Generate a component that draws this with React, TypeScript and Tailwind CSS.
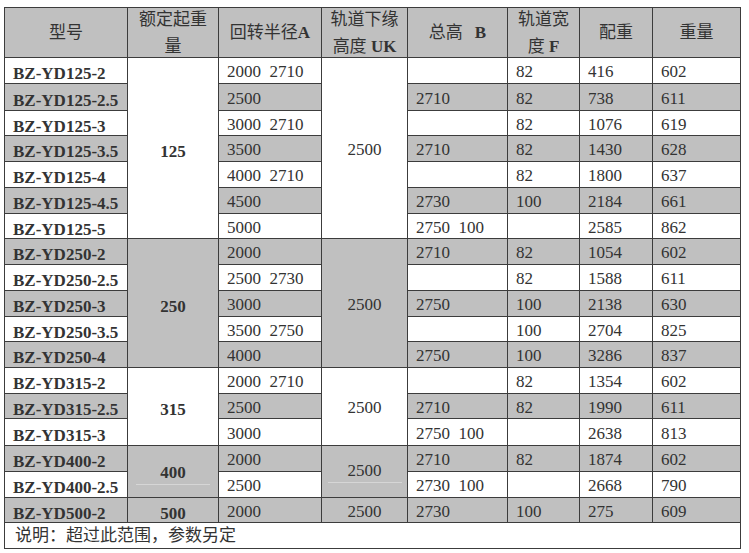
import React from 'react';

type Row = { m: string; a: string; b: string; f: string; p: string; w: string };

const rows: Row[] = [
  { m: 'BZ-YD125-2', a: '2000  2710', b: '', f: '82', p: '416', w: '602' },
  { m: 'BZ-YD125-2.5', a: '2500', b: '2710', f: '82', p: '738', w: '611' },
  { m: 'BZ-YD125-3', a: '3000  2710', b: '', f: '82', p: '1076', w: '619' },
  { m: 'BZ-YD125-3.5', a: '3500', b: '2710', f: '82', p: '1430', w: '628' },
  { m: 'BZ-YD125-4', a: '4000  2710', b: '', f: '82', p: '1800', w: '637' },
  { m: 'BZ-YD125-4.5', a: '4500', b: '2730', f: '100', p: '2184', w: '661' },
  { m: 'BZ-YD125-5', a: '5000', b: '2750  100', f: '', p: '2585', w: '862' },
  { m: 'BZ-YD250-2', a: '2000', b: '2710', f: '82', p: '1054', w: '602' },
  { m: 'BZ-YD250-2.5', a: '2500  2730', b: '', f: '82', p: '1588', w: '611' },
  { m: 'BZ-YD250-3', a: '3000', b: '2750', f: '100', p: '2138', w: '630' },
  { m: 'BZ-YD250-3.5', a: '3500  2750', b: '', f: '100', p: '2704', w: '825' },
  { m: 'BZ-YD250-4', a: '4000', b: '2750', f: '100', p: '3286', w: '837' },
  { m: 'BZ-YD315-2', a: '2000  2710', b: '', f: '82', p: '1354', w: '602' },
  { m: 'BZ-YD315-2.5', a: '2500', b: '2710', f: '82', p: '1990', w: '611' },
  { m: 'BZ-YD315-3', a: '3000', b: '2750  100', f: '', p: '2638', w: '813' },
  { m: 'BZ-YD400-2', a: '2000', b: '2710', f: '82', p: '1874', w: '602' },
  { m: 'BZ-YD400-2.5', a: '2500', b: '2730  100', f: '', p: '2668', w: '790' },
  { m: 'BZ-YD500-2', a: '2000', b: '2730', f: '100', p: '275', w: '609' },
];

type Group = { start: number; label: string; uk: string; span: string; gray: boolean; line: boolean };

const groups: Group[] = [
  { start: 0, label: '125', uk: '2500', span: 'row-span-7', gray: false, line: false },
  { start: 7, label: '250', uk: '2500', span: 'row-span-5', gray: true, line: false },
  { start: 12, label: '315', uk: '2500', span: 'row-span-3', gray: false, line: false },
  { start: 15, label: '400', uk: '2500', span: 'row-span-2', gray: true, line: true },
  { start: 17, label: '500', uk: '2500', span: '', gray: true, line: false },
];

function NumCell({ v, gray }: { v: string; gray: boolean }) {
  return (
    <div
      className={`flex items-center whitespace-pre pl-2 pt-[2px] text-[17px] leading-none ${
        gray ? 'bg-[#c0c0c0]' : 'bg-white'
      }`}
    >
      {v}
    </div>
  );
}

function GroupCell({ text, g, bold }: { text: string; g: Group; bold: boolean }) {
  return (
    <div
      className={`${g.span} flex flex-col items-center justify-center text-[17px] leading-[17px] ${
        g.gray ? 'bg-[#c0c0c0]' : 'bg-white'
      } ${bold ? 'font-bold pt-[6px]' : 'pt-[2px]'}`}
    >
      <span>{text}</span>
      {g.line && <div className="mt-[3px] h-px w-[74px] bg-[#d6d6d6]" />}
    </div>
  );
}

function HeadCell({ children }: { children: React.ReactNode }) {
  return (
    <div className="flex flex-col items-center justify-center bg-[#c0c0c0] text-center text-[17px] leading-[27px]">
      {children}
    </div>
  );
}

export default function App() {
  const cells: React.ReactNode[] = [];
  rows.forEach((r, i) => {
    const gray = i % 2 === 1;
    const g = groups.find((x) => x.start === i);
    cells.push(
      <div
        key={`m${i}`}
        className={`flex items-center pl-2 pt-[6px] text-[17px] font-bold leading-none ${
          gray ? 'bg-[#c0c0c0]' : 'bg-white'
        }`}
      >
        {r.m}
      </div>
    );
    if (g) cells.push(<GroupCell key={`g${i}`} text={g.label} g={g} bold />);
    cells.push(<NumCell key={`a${i}`} v={r.a} gray={gray} />);
    if (g) cells.push(<GroupCell key={`u${i}`} text={g.uk} g={g} bold={false} />);
    cells.push(<NumCell key={`b${i}`} v={r.b} gray={gray} />);
    cells.push(<NumCell key={`f${i}`} v={r.f} gray={gray} />);
    cells.push(<NumCell key={`p${i}`} v={r.p} gray={gray} />);
    cells.push(<NumCell key={`w${i}`} v={r.w} gray={gray} />);
  });

  return (
    <div className="h-[553px] w-[749px] bg-white pl-[4px] pt-[7px] font-['Liberation_Serif','Noto_Sans_CJK_SC',serif] text-[#333333]">
      <div className="grid w-[737px] grid-cols-[122px_90px_102px_85px_99px_71px_72px_87px] grid-rows-[49px_25px_26px_24px_25px_25px_25px_24px_25px_25px_25px_24px_25px_25px_24px_26px_25px_25px_24px_25px] gap-px bg-[#3c3c3c] p-px">
        <HeadCell>
          <span>型号</span>
        </HeadCell>
        <HeadCell>
          <span>额定起重</span>
          <span>量</span>
        </HeadCell>
        <HeadCell>
          <span>
            回转半径<b>A</b>
          </span>
        </HeadCell>
        <HeadCell>
          <span>轨道下缘</span>
          <span>
            高度 <b>UK</b>
          </span>
        </HeadCell>
        <HeadCell>
          <span>
            总高<b className="ml-[12px]">B</b>
          </span>
        </HeadCell>
        <HeadCell>
          <span>轨道宽</span>
          <span>
            度 <b>F</b>
          </span>
        </HeadCell>
        <HeadCell>
          <span>配重</span>
        </HeadCell>
        <HeadCell>
          <span>重量</span>
        </HeadCell>
        {cells}
        <div className="col-span-8 flex items-center bg-white pl-[10px] text-[17px] leading-none">
          说明：超过此范围，参数另定
        </div>
      </div>
    </div>
  );
}
